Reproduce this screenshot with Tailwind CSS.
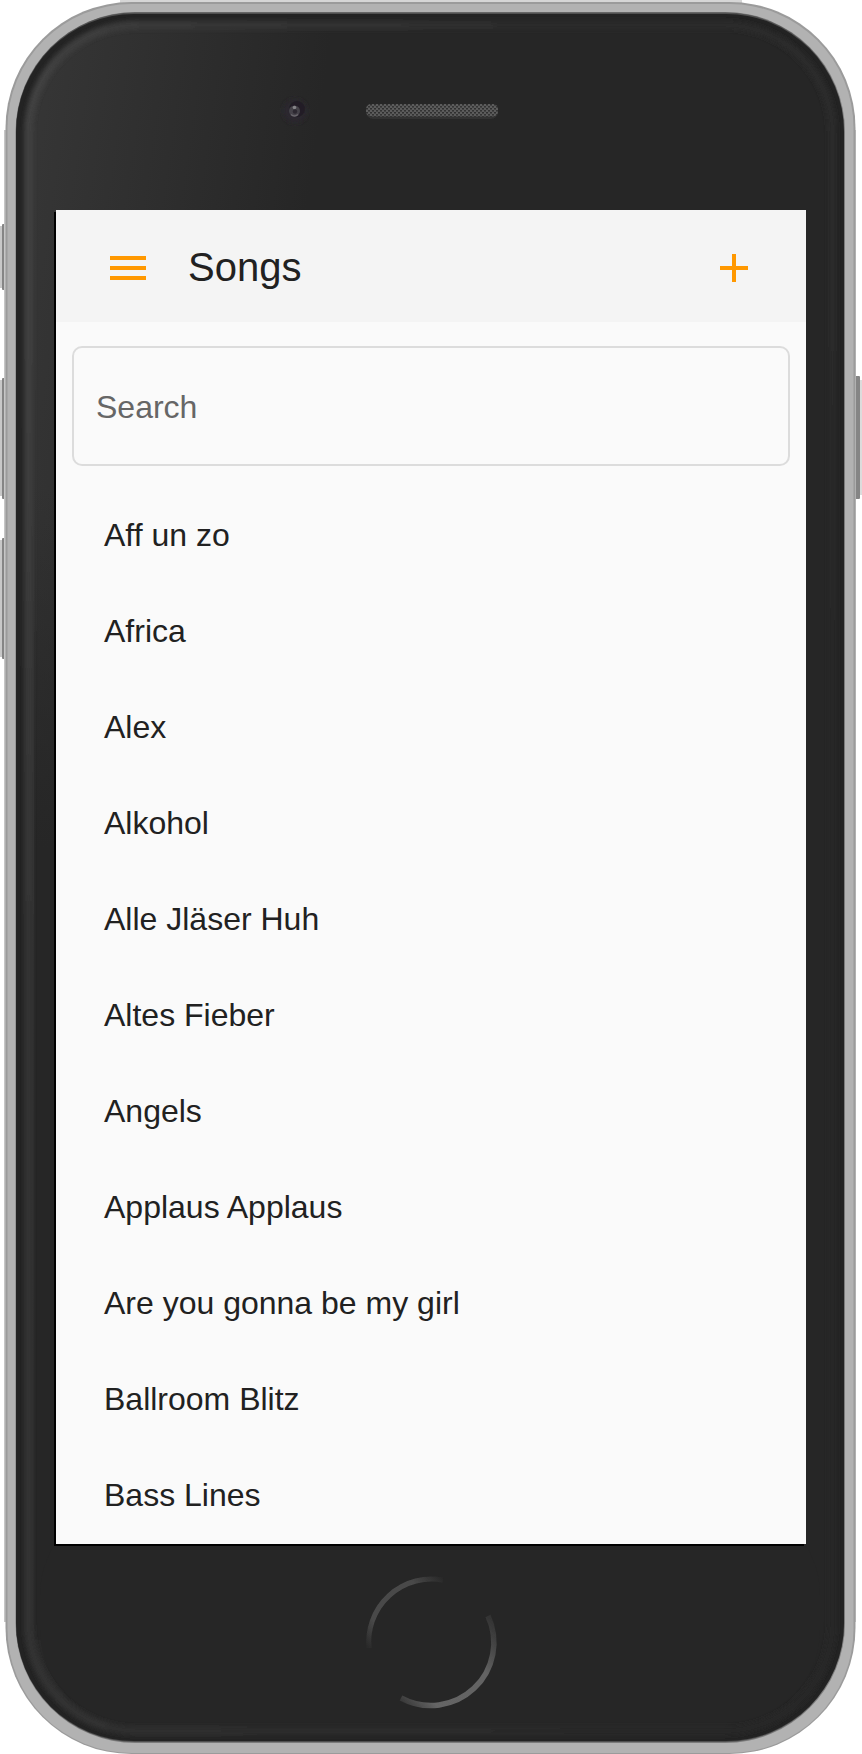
<!DOCTYPE html>
<html lang="en">
<head>
<meta charset="utf-8">
<title>Songs</title>
<script src="https://cdn.jsdelivr.net/npm/@tailwindcss/browser@4"></script>
</head>
<body class="bg-white">
<div class="relative w-[862px] h-[1754px] overflow-hidden pt-[210px] pl-14 font-['Liberation_Sans',Arial,sans-serif]">
  <!-- device frame -->
  <svg class="absolute inset-0" width="862" height="1754" viewBox="0 0 862 1754" fill="none">
    <defs>
      <linearGradient id="sheen" gradientUnits="userSpaceOnUse" x1="20" y1="150" x2="310" y2="190">
        <stop offset="0" stop-color="#363636"/><stop offset=".5" stop-color="#2e2e2e"/><stop offset="1" stop-color="#262626"/>
      </linearGradient>
      <linearGradient id="fade" x1="0" y1="0" x2="0" y2="1">
        <stop offset="0" stop-color="#262626" stop-opacity="0"/><stop offset=".2" stop-color="#262626" stop-opacity="0"/><stop offset=".45" stop-color="#262626"/>
      </linearGradient>
      <linearGradient id="rim" gradientUnits="userSpaceOnUse" x1="16" y1="0" x2="844" y2="0">
        <stop offset="0" stop-color="#414141"/><stop offset=".2" stop-color="#373737"/><stop offset=".6" stop-color="#2c2c2c"/><stop offset="1" stop-color="#292929"/>
      </linearGradient>
      <linearGradient id="rimfade" gradientUnits="userSpaceOnUse" x1="0" y1="300" x2="0" y2="1000">
        <stop offset="0" stop-color="#262626" stop-opacity="0"/><stop offset="1" stop-color="#262626" stop-opacity=".55"/>
      </linearGradient>
      <linearGradient id="arc1" gradientUnits="userSpaceOnUse" x1="368" y1="1652" x2="445" y2="1578">
        <stop offset="0" stop-color="#4a4a4a" stop-opacity="0"/><stop offset=".25" stop-color="#4a4a4a"/><stop offset=".75" stop-color="#4a4a4a"/><stop offset="1" stop-color="#4a4a4a" stop-opacity="0"/>
      </linearGradient>
      <linearGradient id="arc2" gradientUnits="userSpaceOnUse" x1="400" y1="1705" x2="494" y2="1615">
        <stop offset="0" stop-color="#646464" stop-opacity=".2"/><stop offset=".2" stop-color="#656565"/><stop offset=".65" stop-color="#636363"/><stop offset="1" stop-color="#555" stop-opacity=".2"/>
      </linearGradient>
      <pattern id="mesh" width="4" height="4" patternUnits="userSpaceOnUse">
        <rect width="4" height="4" fill="#444"/><rect width="2" height="2" fill="#5c5c5c"/><rect x="2" y="2" width="2" height="2" fill="#5c5c5c"/><rect x="2" width="2" height="1" fill="#303030"/><rect y="2" width="2" height="1" fill="#343434"/>
      </pattern>
      <filter id="soft" x="-10%" y="-10%" width="120%" height="120%"><feGaussianBlur stdDeviation="2"/></filter>
      <filter id="slight" x="-20%" y="-20%" width="140%" height="140%"><feGaussianBlur stdDeviation=".7"/></filter>
    </defs>
    <g fill="#c8c8c8">
      <rect x="0" y="226" width="4" height="62"/><rect x="0" y="380" width="4" height="116"/><rect x="0" y="540" width="4" height="117"/>
      <rect x="859" y="380" width="3" height="115" fill="#dcdcdc"/>
    </g>
    <g fill="#858585">
      <rect x="2" y="224" width="6" height="66" rx="1"/><rect x="2" y="378" width="6" height="121" rx="1"/><rect x="2" y="538" width="6" height="121" rx="1"/>
      <rect x="852" y="376" width="8" height="123" rx="1"/>
    </g>
    <rect x="120" y="0" width="622" height="4" fill="#d6d6d6"/>
    <rect x="4" y="130" width="852" height="1492" fill="#c6c6c6"/>
    <rect x="5.5" y="2" width="850" height="1752" rx="126" fill="#9b9b9b"/>
    <rect x="7.5" y="4" width="846" height="1749" rx="124" fill="#b2b2b2"/>
    <rect x="15.5" y="12" width="829.5" height="1731" rx="120" fill="#7c7c7c"/>
    <rect x="16" y="12.5" width="828" height="1729.5" rx="119" fill="#505050"/>
    <rect x="16" y="14" width="828" height="1727" rx="118" fill="#232323"/>
    <rect x="27" y="25" width="806" height="1706" rx="108" fill="url(#sheen)"/>
    <rect x="34" y="200" width="40" height="1440" fill="url(#fade)"/>
    <rect x="40" y="1500" width="780" height="225" rx="95" fill="#262626"/>
    <g filter="url(#soft)">
      <rect x="28.500" y="25" width="804" height="1706" rx="108" stroke="url(#rim)" stroke-width="9"/>
      <rect x="28.500" y="25" width="804" height="1706" rx="108" stroke="url(#rimfade)" stroke-width="9"/>
    </g>
    <!-- camera and speaker -->
    <circle cx="295" cy="111" r="12" fill="#29262d" filter="url(#soft)"/>
    <circle cx="297" cy="109" r="8" fill="#211e25" filter="url(#slight)"/>
    <circle cx="294.500" cy="111" r="5.500" fill="#454248" filter="url(#slight)"/>
    <circle cx="294.500" cy="107.500" r="1.800" fill="#858388"/><circle cx="295" cy="111.500" r="2.200" fill="#2c2830"/><path d="M291 114.500Q294.500 117.500 298 114.500" stroke="#69666c" stroke-width="1.500"/>
    <rect x="366" y="104" width="132" height="15" rx="7" fill="#303030" filter="url(#slight)"/>
    <rect x="366" y="104" width="132" height="12.500" rx="5" fill="url(#mesh)"/>
    <!-- home button -->
    <g stroke-width="5.500" filter="url(#slight)">
      <path d="M369 1648A63 63 0 0 1 443 1580" stroke="url(#arc1)" stroke-width="5"/>
      <path d="M401 1698A63 63 0 0 0 488 1616" stroke="url(#arc2)"/>
    </g>
    <path d="M54 212H56V1544H804V1546H54Z" fill="#000"/>
  </svg>

  <main class="relative w-[750px] h-[1334px] overflow-hidden bg-[#fafafa] text-[#212121] antialiased">
    <header class="h-28 bg-[#f4f4f4] flex items-center pl-12 pr-12">
      <button class="mt-1" aria-label="Menu">
        <svg class="block size-12" viewBox="0 0 24 24" fill="#ff9800"><path d="M3 18h18v-2H3v2zm0-5h18v-2H3v2zm0-7v2h18V6H3z"/></svg>
      </button>
      <h1 class="ml-9 flex-1 pt-px text-[40px] leading-[64px] font-normal">Songs</h1>
      <button class="mt-1" aria-label="Add">
        <svg class="block size-12" viewBox="0 0 24 24" fill="#ff9800"><path d="M19 13h-6v6h-2v-6H5v-2h6V5h2v6h6v2z"/></svg>
      </button>
    </header>
    <div class="px-4 pt-6">
      <div class="h-[120px] rounded-[10px] border-2 border-[#dcdcdc] px-[22px] pt-0.5 flex items-center text-[32px] text-[#666]">Search</div>
    </div>
    <ul class="pt-[21px] text-[32px]">
      <li class="h-24 px-12 flex items-center">Aff un zo</li>
      <li class="h-24 px-12 flex items-center">Africa</li>
      <li class="h-24 px-12 flex items-center">Alex</li>
      <li class="h-24 px-12 flex items-center">Alkohol</li>
      <li class="h-24 px-12 flex items-center">Alle Jläser Huh</li>
      <li class="h-24 px-12 flex items-center">Altes Fieber</li>
      <li class="h-24 px-12 flex items-center">Angels</li>
      <li class="h-24 px-12 flex items-center">Applaus Applaus</li>
      <li class="h-24 px-12 flex items-center">Are you gonna be my girl</li>
      <li class="h-24 px-12 flex items-center">Ballroom Blitz</li>
      <li class="h-24 px-12 flex items-center">Bass Lines</li>
    </ul>
  </main>
</div>
</body>
</html>
